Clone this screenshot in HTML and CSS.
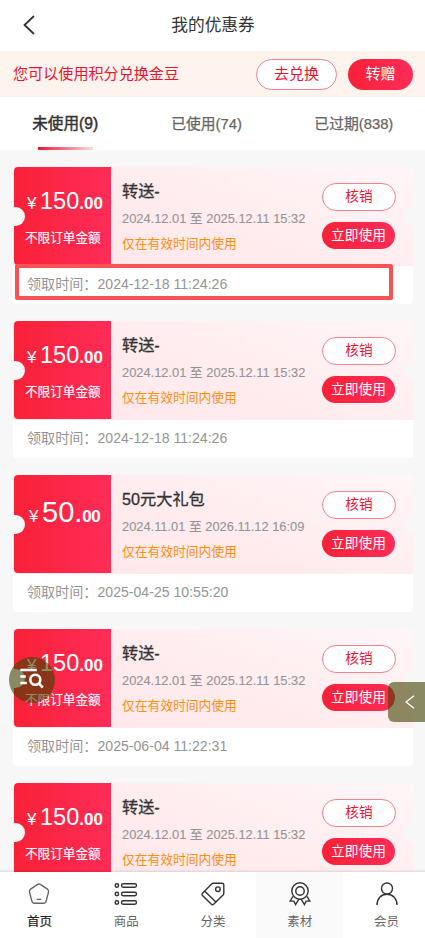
FILE: index.html
```html
<!DOCTYPE html>
<html lang="zh-CN">
<head>
<meta charset="utf-8">
<title>我的优惠券</title>
<link rel="stylesheet" href="styles.css">
</head>
<body>
<div class="app">
  <header class="header">
    <svg class="back" viewBox="0 0 12 20"><path d="M11 1 1.5 10 11 19"/></svg>
    <h1>我的优惠券</h1>
  </header>
  <section class="notice">
    <p>您可以使用积分兑换金豆</p>
    <button class="pill outline exchange">去兑换</button>
    <button class="pill solid gift">转赠</button>
  </section>
  <nav class="tabs">
    <a class="tab active"><span>未使用(9)</span></a>
    <a class="tab"><span>已使用(74)</span></a>
    <a class="tab"><span>已过期(838)</span></a>
  </nav>
  <main class="list">
    <article class="card">
      <div class="coupon">
        <div class="amount"><div class="price"><i>¥</i><span>150</span><b>.00</b></div><p>不限订单金额</p></div>
        <div class="info"><h2>转送-</h2><time>2024.12.01 至 2025.12.11 15:32</time><p>仅在有效时间内使用</p></div>
        <div class="actions"><button class="pill outline">核销</button><button class="pill solid">立即使用</button></div>
      </div>
      <p class="received">领取时间：2024-12-18 11:24:26</p>
      <div class="highlight"></div>
    </article>
    <article class="card">
      <div class="coupon">
        <div class="amount"><div class="price"><i>¥</i><span>150</span><b>.00</b></div><p>不限订单金额</p></div>
        <div class="info"><h2>转送-</h2><time>2024.12.01 至 2025.12.11 15:32</time><p>仅在有效时间内使用</p></div>
        <div class="actions"><button class="pill outline">核销</button><button class="pill solid">立即使用</button></div>
      </div>
      <p class="received">领取时间：2024-12-18 11:24:26</p>
    </article>
    <article class="card">
      <div class="coupon">
        <div class="amount"><div class="price large"><i>¥</i><span>50.</span><b>00</b></div></div>
        <div class="info"><h2>50元大礼包</h2><time>2024.11.01 至 2026.11.12 16:09</time><p>仅在有效时间内使用</p></div>
        <div class="actions"><button class="pill outline">核销</button><button class="pill solid">立即使用</button></div>
      </div>
      <p class="received">领取时间：2025-04-25 10:55:20</p>
    </article>
    <article class="card">
      <div class="coupon">
        <div class="amount"><div class="price"><i>¥</i><span>150</span><b>.00</b></div><p>不限订单金额</p></div>
        <div class="info"><h2>转送-</h2><time>2024.12.01 至 2025.12.11 15:32</time><p>仅在有效时间内使用</p></div>
        <div class="actions"><button class="pill outline">核销</button><button class="pill solid">立即使用</button></div>
      </div>
      <p class="received">领取时间：2025-06-04 11:22:31</p>
    </article>
    <article class="card">
      <div class="coupon">
        <div class="amount"><div class="price"><i>¥</i><span>150</span><b>.00</b></div><p>不限订单金额</p></div>
        <div class="info"><h2>转送-</h2><time>2024.12.01 至 2025.12.11 15:32</time><p>仅在有效时间内使用</p></div>
        <div class="actions"><button class="pill outline">核销</button><button class="pill solid">立即使用</button></div>
      </div>
    </article>
  </main>
  <div class="float-search">
    <svg viewBox="0 0 24 22"><path d="M.3 2h16.500M.3 8.500h5.500M.3 15h6.500"/><circle cx="15.300" cy="11.800" r="5"/><path d="m19 15.600 3.800 3.900"/></svg>
  </div>
  <div class="float-drawer"><svg viewBox="0 0 10 14"><path d="M9 .8 1 7l8 6.200"/></svg></div>
  <footer class="tabbar">
    <a class="item current">
      <svg viewBox="0 0 24 24"><path class="soft" d="M10.600 2.400q1.400-.9 2.800 0l7 4.700q1.600 1.200 1.100 3l-2.300 8.800q-.6 2.400-3 2.400H7.800q-2.400 0-3-2.400L2.500 10.100q-.5-1.800 1.100-3zM9.700 17.400h4.600"/></svg>
      <span>首页</span>
    </a>
    <a class="item">
      <svg viewBox="0 0 24 24"><circle cx="2.900" cy="3.500" r="1.700"/><circle cx="2.900" cy="12" r="1.700"/><circle cx="2.900" cy="20.500" r="1.700"/><rect x="7.500" y="1.800" width="15" height="3.500" rx="1.700"/><rect x="7.500" y="10.200" width="15" height="3.500" rx="1.700"/><rect x="7.500" y="18.700" width="15" height="3.500" rx="1.700"/></svg>
      <span>商品</span>
    </a>
    <a class="item">
      <svg viewBox="0 0 24 24"><path d="M12.300 1.300H21q1.800 0 1.800 1.800v8.100q0 1-.7 1.700L12.600 22.200q-1.100 1.100-2.200 0L1.500 13.500q-1-1.100 0-2.200l9.100-9.300q.7-.7 1.700-.7zM3.800 9.200l10.800 10.600"/><circle cx="16.900" cy="7.200" r="2.300"/></svg>
      <span>分类</span>
    </a>
    <a class="item shaded">
      <svg viewBox="0 0 24 24"><circle cx="12" cy="9" r="8.200"/><circle cx="12" cy="9" r="4.200"/><path d="M5 14.400 2.200 19l3.600.1 1.800 3.400 3.300-5.300M19 14.400l2.800 4.600-3.600.1-1.800 3.400-3.300-5.300"/></svg>
      <span>素材</span>
    </a>
    <a class="item">
      <svg viewBox="0 0 24 24"><circle cx="12" cy="6.500" r="5.500"/><path d="M2 23c0-6.500 4-10.800 10-10.800S22 16.500 22 23"/></svg>
      <span>会员</span>
    </a>
  </footer>
</div>
</body>
</html>
```

FILE: styles.css
```css
* { box-sizing: border-box; }
body, h1, h2, p { margin: 0; font-weight: 400; }
body {
  height: 938px;
  overflow: hidden;
  background: #f7f7f7;
  color: #333;
  font-family: "Liberation Sans", "Noto Sans CJK SC", sans-serif;
}
.app { position: relative; height: 938px; overflow: hidden; white-space: nowrap; }
svg { fill: none; stroke: #333; }

.header { position: relative; height: 51px; padding-left: 1px; background: #fff; display: flex; justify-content: center; }
.header h1 { font-size: 16.700px; line-height: 52px; }
.back { position: absolute; left: 23px; top: 15px; width: 12px; height: 20px; stroke-width: 1.800; }

.notice { height: 46px; padding: 0 12px 0 13px; background: #fff3ee; display: flex; align-items: center; }
.notice p { flex: 1; color: #e9142f; font-size: 15.100px; line-height: 46px; }
.pill {
  display: flex; align-items: center; justify-content: center;
  padding: 0; border: 0; border-radius: 16px;
  font-family: inherit; font-size: 13.700px; line-height: 20px; white-space: nowrap;
}
.outline { background: #fff; border: 1px solid #f5808f; color: #e9142f; }
.solid { background: linear-gradient(90deg, #f92137, #ff2c58); color: #fff; }
.notice .pill { height: 31px; font-size: 15px; padding-bottom: 1px; }
.exchange { width: 81px; margin-right: 11px; }
.gift { width: 65px; }

.tabs { height: 53px; background: #fff; display: flex; }
.tab { position: relative; display: flex; justify-content: center; color: #666; font-size: 14.800px; line-height: 54px; }
.tab:nth-child(1) { width: 131px; }
.tab:nth-child(2) { width: 153px; }
.tab:nth-child(3) { width: 143px; }
.tab span { -webkit-text-stroke: .25px; }
.tab.active { color: #333; font-size: 15.600px; }
.tab.active span { -webkit-text-stroke: .45px #333; }
.tab.active::after { content: ""; position: absolute; left: 38px; bottom: 0; width: 55px; height: 3px; background: linear-gradient(90deg, #e9142f, #fbdde1); }

.list { padding: 17px 12px 0 13px; display: flex; flex-direction: column; gap: 17px; }
.card { position: relative; height: 137px; flex: none; background: #fff; border-radius: 4px; }
.coupon {
  position: relative; z-index: 0; height: 99px; display: flex; overflow: hidden; border-radius: 4px 4px 0 0;
  background: linear-gradient(20deg, #ffe8eb 15%, #ffebee 45%, #fff6f7 100%);
}
.coupon::before, .coupon::after { content: ""; position: absolute; top: 40px; width: 20px; height: 19px; border-radius: 10px; background: #f7f7f7; }
.coupon::before { left: -8px; z-index: 1; }
.coupon::after { right: -11px; }
.amount { width: 97px; height: 98px; margin-left: 1px; border-radius: 4px 0 0 4px; background: linear-gradient(90deg, #f92137, #ff2c58); color: #fff; padding-top: 19px; }
.price { display: flex; align-items: baseline; padding-left: 13px; line-height: 30px; }
.price i { width: 13px; font-style: normal; font-size: 17px; }
.price span { font-size: 23.500px; }
.price b { font-size: 17px; }
.price.large { padding-left: 15px; padding-top: 3px; }
.price.large span { font-size: 29px; }
.price.large b { letter-spacing: -.5px; }
.amount p { padding-left: 11px; margin-top: 9px; font-size: 12.600px; line-height: 20px; -webkit-text-stroke: .15px; }
.info { width: 200px; padding: 13px 0 0 11px; display: flex; flex-direction: column; }
.info h2 { font-size: 16.200px; line-height: 22px; -webkit-text-stroke: .3px; }
.info time { margin-top: 7px; font-size: 12.850px; line-height: 20px; color: #949494; -webkit-text-stroke: .1px; }
.info p { margin-top: 5px; font-size: 12.750px; line-height: 20px; color: #ff8e12; }
.actions { width: 74px; margin-left: 11px; padding-top: 16px; display: flex; flex-direction: column; gap: 11px; }
.actions .pill { width: 74px; height: 28px; }
.actions .solid { height: 27px; width: 73px; }
.received { padding: 7px 0 0 14px; font-size: 14.100px; line-height: 22px; color: #949494; }
.highlight { position: absolute; z-index: 1; left: 2px; top: 97px; width: 378px; height: 36px; border: 4px solid #fc5153; border-radius: 2px; }

.float-search, .float-drawer { position: absolute; z-index: 3; background: rgba(63, 65, 0, .6); display: flex; align-items: center; justify-content: center; }
.float-search { left: 9px; top: 657px; width: 46px; height: 46px; border-radius: 50%; }
.float-search svg { width: 24px; height: 22px; margin-top: -2px; stroke: #fff; stroke-width: 2.600; }
.float-drawer { left: 388px; top: 682px; width: 43px; height: 40px; border-radius: 6px; }
.float-drawer svg { width: 10px; height: 14px; stroke: #fff; stroke-width: 1.300; }

.tabbar { position: absolute; z-index: 2; left: -4px; bottom: 0; width: 434px; height: 66px; background: #fff; display: flex; box-shadow: 0 -1px 2px rgba(0, 0, 0, .12); }
.item { flex: 1; display: flex; flex-direction: column; align-items: center; padding-top: 10px; color: #666; font-size: 12.500px; line-height: 20px; }
.item svg { width: 24px; height: 24px; stroke-width: 1.400; }
.item .soft { stroke: #666; }
.item span { margin-top: 6px; }
.current { color: #222; }
.current span { -webkit-text-stroke: .2px; }
.shaded { background: #fafafa; }
```
